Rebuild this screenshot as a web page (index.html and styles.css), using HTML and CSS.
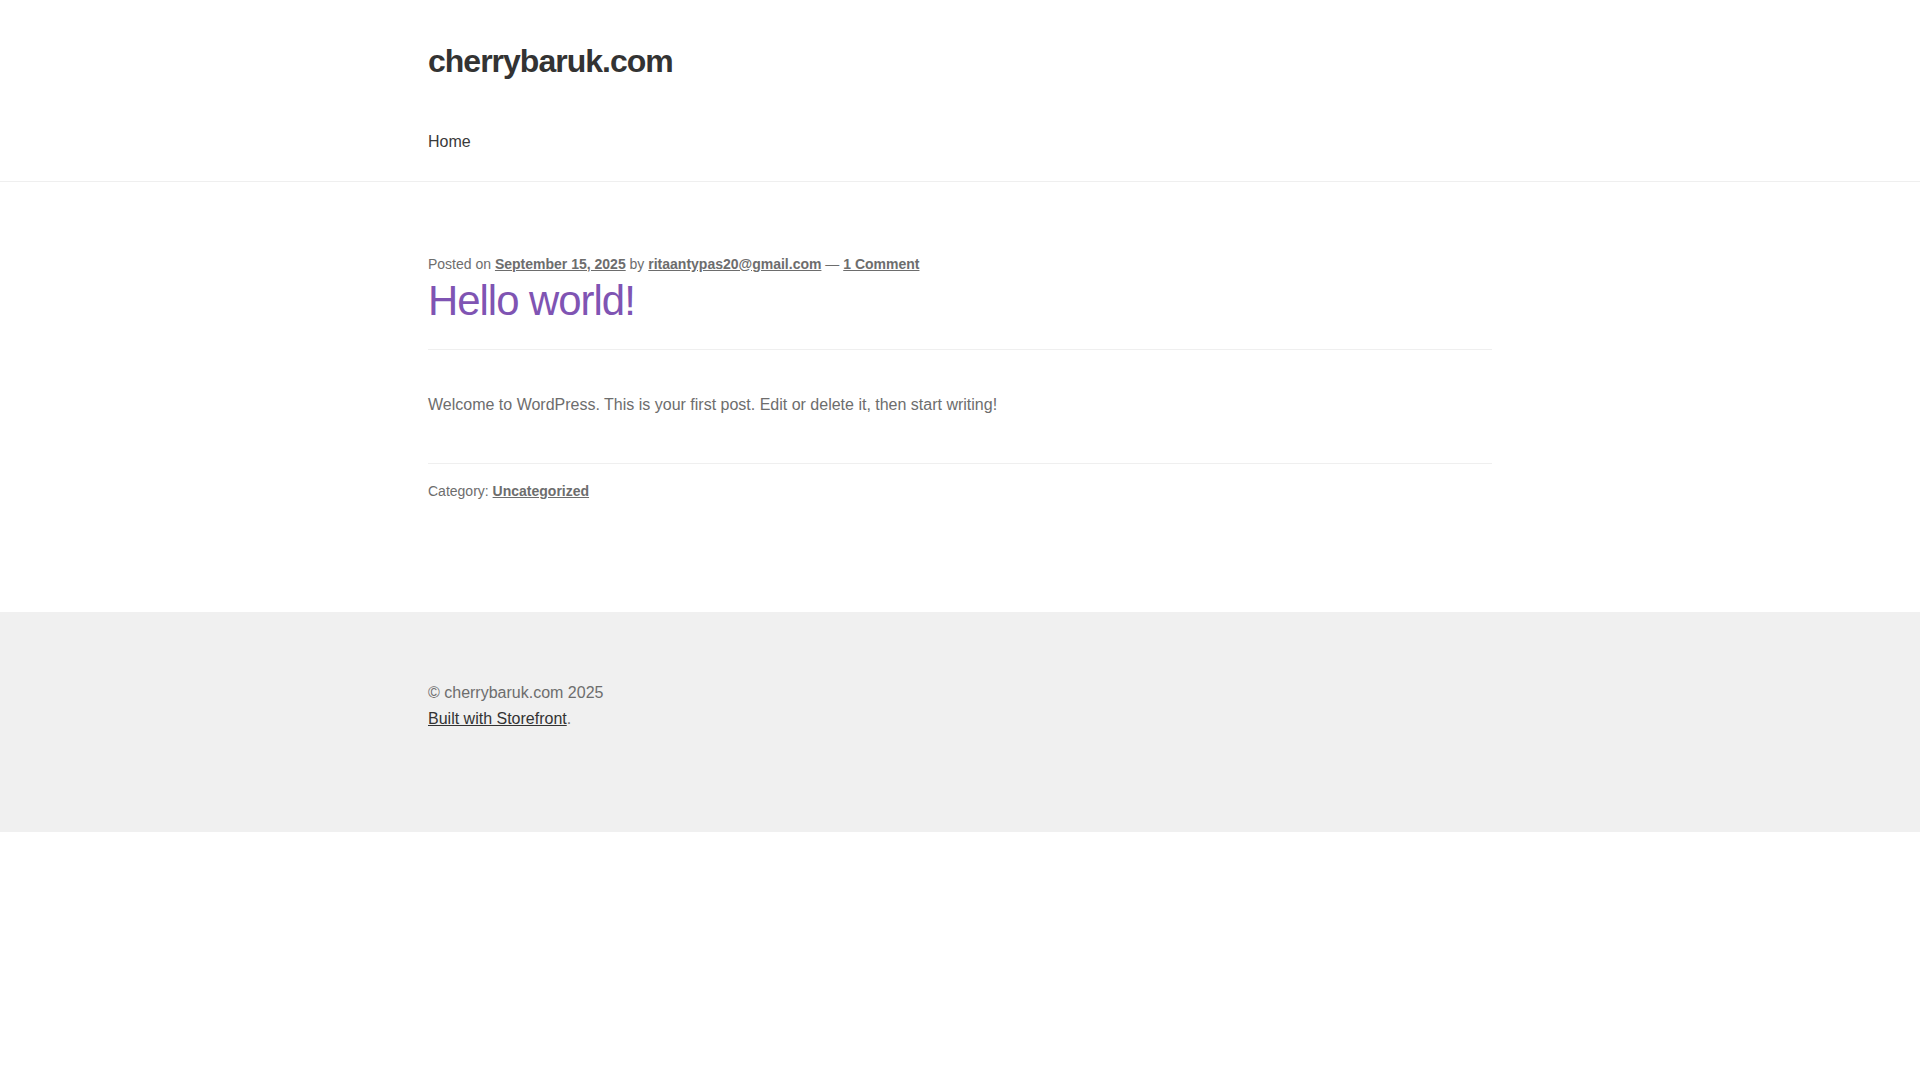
FILE: index.html
```html
<!DOCTYPE html>
<html lang="en">
<head>
<meta charset="utf-8">
<title>cherrybaruk.com</title>
<link rel="stylesheet" href="styles.css">
</head>
<body>
<header class="site-header">
  <div class="col-full">
    <div class="site-branding">
      <h1 class="site-title">cherrybaruk.com</h1>
    </div>
    <nav class="main-navigation">
      <ul class="menu">
        <li><a href="#">Home</a></li>
      </ul>
    </nav>
  </div>
</header>
<main class="site-content">
  <div class="col-full">
    <article class="post">
      <header class="entry-header">
        <div class="entry-meta">Posted on <a href="#">September 15, 2025</a> by <a href="#">ritaantypas20@gmail.com</a> — <a href="#">1 Comment</a></div>
        <h2 class="entry-title">Hello world!</h2>
      </header>
      <div class="entry-content">
        <p>Welcome to WordPress. This is your first post. Edit or delete it, then start writing!</p>
      </div>
      <footer class="entry-footer">Category: <a href="#">Uncategorized</a></footer>
    </article>
  </div>
</main>
<footer class="site-footer">
  <div class="col-full">
    <div class="site-info">
      <div>© cherrybaruk.com 2025</div>
      <div><a class="credit" href="#">Built with Storefront</a>.</div>
    </div>
  </div>
</footer>
</body>
</html>
```

FILE: styles.css
```css
html, body {
  margin: 0;
  padding: 0;
  background: #ffffff;
}

body {
  font-family: "Liberation Sans", Arial, Helvetica, sans-serif;
  font-size: 16px;
  line-height: 1.618;
  color: #6d6d6d;
}

.col-full {
  max-width: 1064px;
  margin: 0 auto;
}

/* Header */
.site-header {
  padding-top: 41.9px;
  border-bottom: 1px solid #efefef;
}

.site-title {
  margin: 0 0 22.65px;
  font-size: 32px;
  line-height: 1.214;
  letter-spacing: -1px;
  font-weight: 700;
  color: #333333;
}

.main-navigation .menu {
  list-style: none;
  margin: 0;
  padding: 0;
  display: flex;
}

.main-navigation .menu a {
  display: block;
  padding: 25.9px 0;
  line-height: 25.9px;
  color: #3a3a3a;
  text-decoration: none;
}

/* Content */
.site-content {
  padding-top: 70.5px;
}

.entry-header {
  padding-bottom: 21.6px;
  border-bottom: 1px solid #efefef;
  margin-bottom: 41.9px;
}

.entry-meta {
  font-size: 14px;
  line-height: 22.65px;
  color: #6d6d6d;
}

.entry-meta a,
.entry-footer a {
  color: #6d6d6d;
  font-weight: 700;
  text-decoration: underline;
}

.entry-title {
  margin: 1.2px 0 0;
  font-size: 41.89px;
  line-height: 1.214;
  letter-spacing: -1px;
  font-weight: 400;
  color: #7f54b3;
}

.entry-content {
  padding-bottom: 45px;
  border-bottom: 1px solid #efefef;
}

.entry-content p {
  margin: 0;
}

.entry-footer {
  padding-top: 16.5px;
  margin-bottom: 108.8px;
  font-size: 14px;
  line-height: 22.65px;
}

/* Footer */
.site-footer {
  background: #f0f0f0;
  padding: 68.7px 0 100.1px;
  color: #6d6d6d;
}

.site-info {
  line-height: 25.9px;
}

.site-info .credit {
  color: #333333;
  text-decoration: underline;
}
```
